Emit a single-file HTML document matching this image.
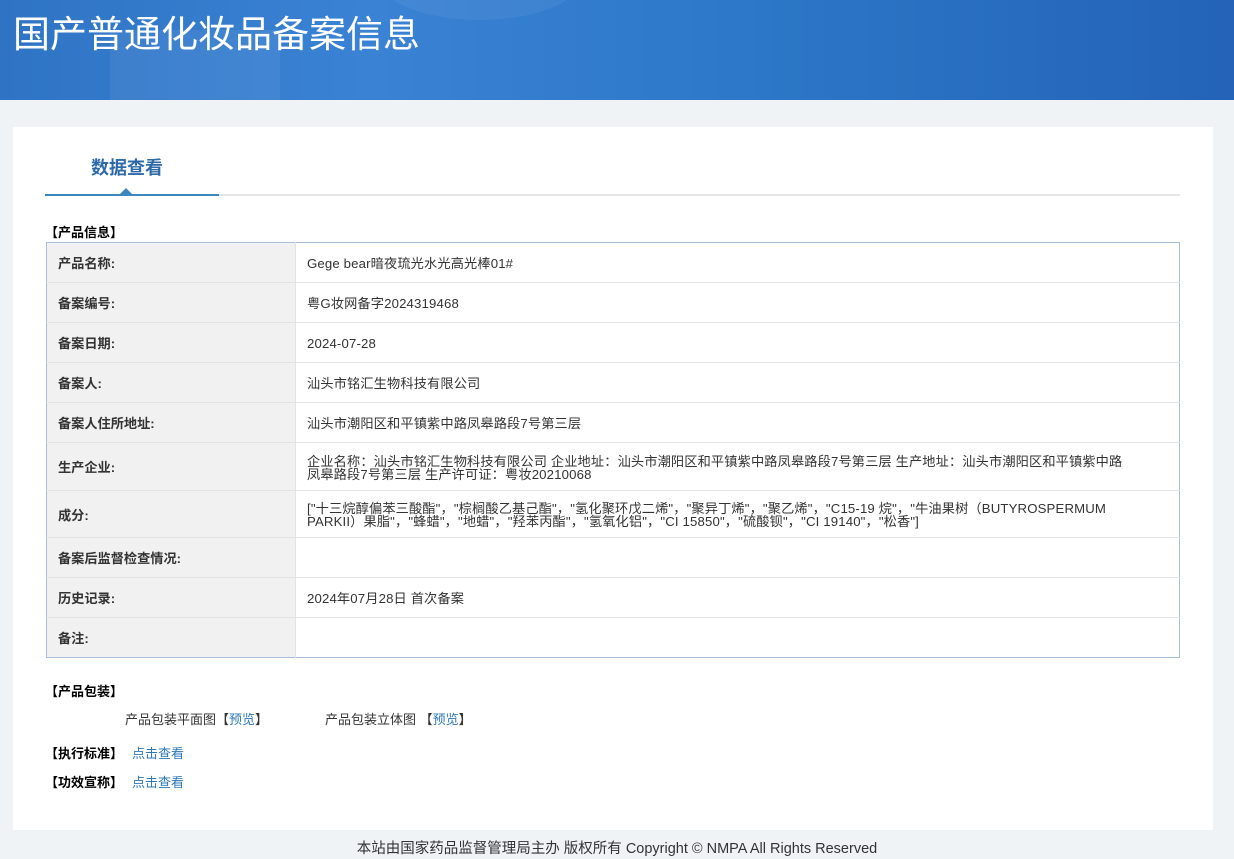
<!DOCTYPE html>
<html><head><meta charset="utf-8"><style>
*{margin:0;padding:0;box-sizing:border-box}
body{width:1234px;height:859px;overflow:hidden;background:#eff3f6;font-family:"Liberation Sans","Noto Sans CJK SC",sans-serif;font-size:13px;color:#333;position:relative}
.hd{position:absolute;left:0;top:0;width:1234px;height:100px;background:linear-gradient(90deg,#2f74c4 0%,#3a82d4 30%,#2d78c8 60%,#2463b7 100%);overflow:hidden}
.hd h1{position:absolute;left:13px;top:4px;font-size:37px;font-weight:normal;color:#fff;font-family:"Noto Sans CJK SC",sans-serif}
.card{position:absolute;left:13px;top:127px;width:1200px;height:703px;background:#fff}
.tab{position:absolute;left:78px;top:27px;font-size:18px;font-weight:bold;color:#2d6aa7;font-family:"Noto Sans CJK SC",sans-serif}
.line{position:absolute;left:32px;top:67px;width:1135px;height:2px;background:#e4e6e8}
.line2{position:absolute;left:32px;top:67px;width:174px;height:2px;background:#3c87c0}
.tri{position:absolute;left:107px;top:61px;width:0;height:0;border-left:6px solid transparent;border-right:6px solid transparent;border-bottom:6px solid #3c87c0}
.sec{position:absolute;left:32px;font-weight:bold;color:#000;font-family:"Noto Sans CJK SC",sans-serif;font-size:13px}
table{position:absolute;left:33px;top:115px;width:1134px;border-collapse:collapse;border:1px solid #a9c0d9}
td{border-bottom:1px solid #e3e3e3;vertical-align:middle;font-size:13.2px;line-height:13px;padding-top:2px}
td.l{width:249px;background:#f1f1f1;font-weight:bold;color:#333;padding-left:11px;border-right:1px solid #e3e3e3}
td.v{padding-left:11px;color:#333;letter-spacing:0.15px}
a{color:#2d78b8;text-decoration:none}
.ft{position:absolute;top:837px;left:0;width:1234px;text-align:center;font-size:14.5px;color:#333}
</style></head><body>
<div class="hd"><div style="position:absolute;left:110px;top:30px;width:170px;height:70px;background:rgba(255,255,255,.06)"></div><div style="position:absolute;left:380px;top:-60px;width:200px;height:80px;border-radius:50%;background:rgba(255,255,255,.05)"></div><h1>国产普通化妆品备案信息</h1></div>
<div class="card">
<div class="tab">数据查看</div>
<div class="line"></div><div class="line2"></div><div class="tri"></div>
<div class="sec" style="top:95px">【产品信息】</div>
<table>
<tr style="height:40px"><td class="l">产品名称:</td><td class="v">Gege bear暗夜琉光水光高光棒01#</td></tr>
<tr style="height:40px"><td class="l">备案编号:</td><td class="v">粤G妆网备字2024319468</td></tr>
<tr style="height:40px"><td class="l">备案日期:</td><td class="v">2024-07-28</td></tr>
<tr style="height:40px"><td class="l">备案人:</td><td class="v">汕头市铭汇生物科技有限公司</td></tr>
<tr style="height:40px"><td class="l">备案人住所地址:</td><td class="v">汕头市潮阳区和平镇紫中路凤皋路段7号第三层</td></tr>
<tr style="height:48px"><td class="l">生产企业:</td><td class="v">企业名称：汕头市铭汇生物科技有限公司 企业地址：汕头市潮阳区和平镇紫中路凤皋路段7号第三层 生产地址：汕头市潮阳区和平镇紫中路<br>凤皋路段7号第三层 生产许可证：粤妆20210068</td></tr>
<tr style="height:47px"><td class="l">成分:</td><td class="v">["十三烷醇偏苯三酸酯"，"棕榈酸乙基己酯"，"氢化聚环戊二烯"，"聚异丁烯"，"聚乙烯"，"C15-19 烷"，"牛油果树（BUTYROSPERMUM<br>PARKII）果脂"，"蜂蜡"，"地蜡"，"羟苯丙酯"，"氢氧化铝"，"CI 15850"，"硫酸钡"，"CI 19140"，"松香"]</td></tr>
<tr style="height:40px"><td class="l">备案后监督检查情况:</td><td class="v"></td></tr>
<tr style="height:40px"><td class="l">历史记录:</td><td class="v">2024年07月28日 首次备案</td></tr>
<tr style="height:40px"><td class="l" style="border-bottom:none">备注:</td><td class="v" style="border-bottom:none"></td></tr>
</table>
<div class="sec" style="top:554px">【产品包装】</div>
<div style="position:absolute;left:112px;top:582px">产品包装平面图【<a>预览</a>】</div>
<div style="position:absolute;left:312px;top:582px">产品包装立体图 【<a>预览</a>】</div>
<div class="sec" style="top:616px">【执行标准】 <a style="font-weight:normal;margin-left:6px">点击查看</a></div>
<div class="sec" style="top:645px">【功效宣称】 <a style="font-weight:normal;margin-left:6px">点击查看</a></div>
</div>
<div class="ft">本站由国家药品监督管理局主办 版权所有 Copyright © NMPA All Rights Reserved</div>
</body></html>
